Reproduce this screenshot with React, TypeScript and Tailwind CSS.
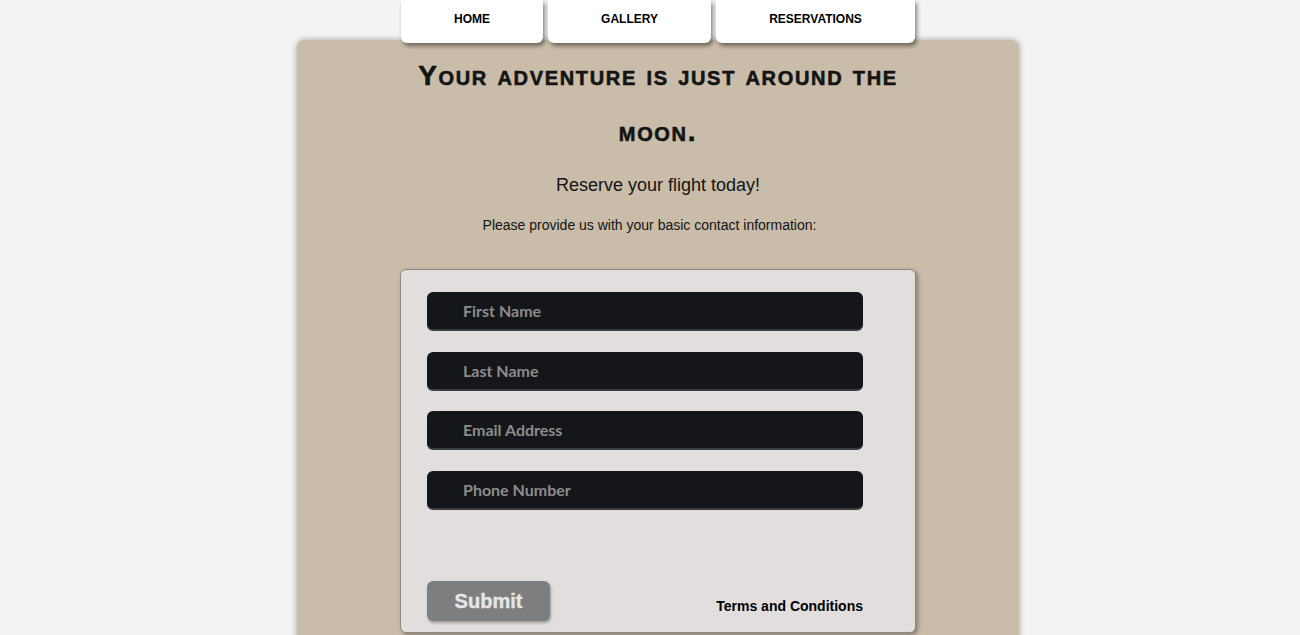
import React from "react";

const fields = ["First Name", "Last Name", "Email Address", "Phone Number"];

const NavTab = ({ label, width }: { label: string; width: string }) => (
  <a
    href="#"
    className={`${width} flex h-[43px] items-center justify-center rounded-b-[6px] bg-white pb-[6px] text-[12px] font-bold text-black shadow-[2px_3px_4px_rgba(0,0,0,0.45)]`}
  >
    {label}
  </a>
);

export default function App() {
  return (
    <div
      className="min-h-screen overflow-hidden bg-[#f4f2f3]"
      style={{ fontFamily: '"Liberation Sans", Arial, sans-serif' }}
    >
      <nav className="relative z-10 flex justify-center gap-[5px] pl-[16px]">
        <NavTab label="HOME" width="w-[142px]" />
        <NavTab label="GALLERY" width="w-[163px]" />
        <NavTab label="RESERVATIONS" width="w-[199px]" />
      </nav>

      <main className="mx-auto -mt-[3px] w-[722px] translate-x-[8px] rounded-[8px] bg-[#c9bca9] pb-10 shadow-[0_0_6px_rgba(0,0,0,0.35)]">
        <div className="mx-auto flex w-[516px] flex-col items-center pt-[8px] text-center">
          <h1 className="text-[28px] font-black leading-[56px] tracking-[0.06em] text-[#141414] [font-variant:small-caps] [-webkit-text-stroke:0.6px_#141414]">
            Your adventure is just around the moon.
          </h1>
          <p className="mt-[12px] text-[18px] text-[#141414]">Reserve your flight today!</p>
          <p className="mt-[16px] pr-[17px] text-[14px] text-[#141414]">
            Please provide us with your basic contact information:
          </p>

          <form className="mt-[33px] flex h-[364px] w-[516px] flex-col rounded-[6px] border border-[#8a8888] bg-[#e1dedd] px-[26px] pt-[22px] pb-[11px] shadow-[2px_2px_4px_rgba(0,0,0,0.35)]">
            <div className="flex flex-col gap-[20.5px]">
              {fields.map((f) => (
                <input
                  key={f}
                  placeholder={f}
                  className="h-[39px] w-[436px] rounded-[6px] border-b-2 border-[#3b3d42] bg-[#14161a] pl-[36px] text-[16px] font-bold text-white outline-none placeholder:text-[#8c8c8c]"
                  style={{ fontFamily: "Lato, sans-serif" }}
                />
              ))}
            </div>
            <div className="mt-auto flex items-end justify-between pr-[26px]">
              <button
                type="button"
                className="h-[40px] w-[123px] rounded-[6px] bg-[#7d7e80] text-[20px] font-bold text-[#e6e6e6] shadow-[1px_2px_3px_rgba(0,0,0,0.3)] [-webkit-text-stroke:0.4px_#e6e6e6]"
              >
                Submit
              </button>
              <span className="mb-[4px] text-[14px] font-bold text-black">Terms and Conditions</span>
            </div>
          </form>
        </div>
      </main>
    </div>
  );
}
